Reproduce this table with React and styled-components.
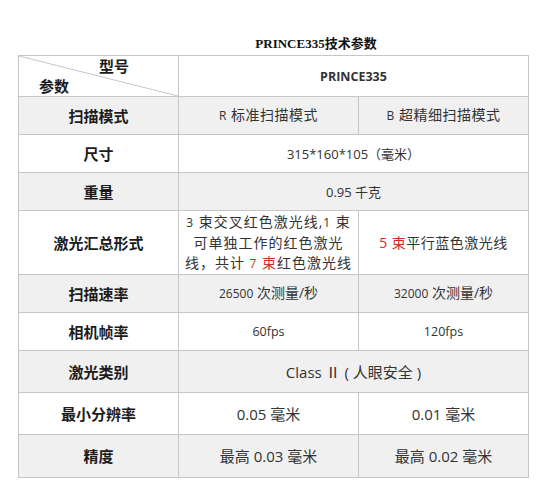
import React from "react";
import styled, { createGlobalStyle } from "styled-components";

const Global = createGlobalStyle`
  html, body { margin: 0; padding: 0; background: #fff; }
  body { font-family: "Open Sans", "Noto Sans CJK SC", sans-serif; color: #333; }
`;

const Page = styled.div`
  padding: 36px 0 0 18px;
  width: 510px;
`;

const Title = styled.div`
  font-family: "Liberation Serif", "Noto Sans CJK SC", serif;
  font-weight: bold;
  font-size: 13px;
  line-height: 16px;
  height: 16px;
  color: #111;
  text-align: center;
  padding-left: 86px;
  margin-bottom: 3px;
`;

const Table = styled.table`
  border-collapse: collapse;
  width: 510px;
  table-layout: fixed;
`;

const Row = styled.tr`
  height: ${(p) => p.$h}px;
  background: ${(p) => (p.$gray ? "#f0f0f0" : "#fff")};
`;

const Label = styled.th`
  border: 1px solid #c6c6c6;
  font-family: "Noto Sans CJK SC", sans-serif;
  font-weight: bold;
  font-size: 15px;
  line-height: 20px;
  color: #1c1c1c;
  text-align: center;
  padding: 0;
`;

const Cell = styled.td`
  border: 1px solid #c6c6c6;
  text-align: center;
  font-size: ${(p) => p.$size || 14}px;
  line-height: ${(p) => p.$lh || 20}px;
  letter-spacing: ${(p) => p.$ls || 0}px;
  color: #333;
  padding: 0;
`;

const Small = styled.span`
  font-size: 12px;
`;

const Red = styled.span`
  color: #d22b1f;
`;

const CornerCell = styled.th`
  border: 1px solid #c6c6c6;
  position: relative;
  padding: 0;
  font-family: "Noto Sans CJK SC", sans-serif;
  font-weight: bold;
  font-size: 15px;
  color: #1c1c1c;
`;

const CornerGrid = styled.div`
  display: grid;
  grid-template-rows: 20px 20px;
  height: 40px;
`;

const Top = styled.span`
  justify-self: end;
  padding-right: 49px;
  line-height: 20px;
`;

const Bottom = styled.span`
  justify-self: start;
  padding-left: 20px;
  line-height: 20px;
`;

const Diagonal = styled.svg`
  position: absolute;
  inset: 0;
  width: 100%;
  height: 100%;
  pointer-events: none;
`;

const ModelHead = styled.th`
  border: 1px solid #c6c6c6;
  font-family: "Open Sans", "Noto Sans CJK SC", sans-serif;
  font-weight: bold;
  font-size: 12.5px;
  color: #333;
`;

export default function App() {
  return (
    <>
      <Global />
      <Page>
        <Title>PRINCE335技术参数</Title>
        <Table>
          <colgroup>
            <col style={{ width: 160 }} />
            <col style={{ width: 180 }} />
            <col style={{ width: 170 }} />
          </colgroup>
          <tbody>
            <Row $h={41}>
              <CornerCell>
                <Diagonal preserveAspectRatio="none" viewBox="0 0 100 100">
                  <line x1="0" y1="0" x2="100" y2="100" stroke="#c6c6c6" strokeWidth="1" vectorEffect="non-scaling-stroke" />
                </Diagonal>
                <CornerGrid>
                  <Top>型号</Top>
                  <Bottom>参数</Bottom>
                </CornerGrid>
              </CornerCell>
              <ModelHead colSpan={2}>PRINCE335</ModelHead>
            </Row>
            <Row $h={38} $gray>
              <Label>扫描模式</Label>
              <Cell $ls={0.5}><Small>R</Small> 标准扫描模式</Cell>
              <Cell $ls={0.5}><Small>B</Small> 超精细扫描模式</Cell>
            </Row>
            <Row $h={38}>
              <Label>尺寸</Label>
              <Cell colSpan={2} $size={13}>315*160*105（毫米）</Cell>
            </Row>
            <Row $h={38} $gray>
              <Label>重量</Label>
              <Cell colSpan={2} $size={13}>0.95 千克</Cell>
            </Row>
            <Row $h={64}>
              <Label>激光汇总形式</Label>
              <Cell $ls={1} $lh={20}>
                <Small>3</Small> 束交叉红色激光线,<Small>1</Small> 束<br />
                可单独工作的红色激光<br />
                线，共计 <Red><Small>7</Small> 束</Red>红色激光线
              </Cell>
              <Cell $ls={0.5}><Red>5 束</Red>平行蓝色激光线</Cell>
            </Row>
            <Row $h={38} $gray>
              <Label>扫描速率</Label>
              <Cell $size={14}><Small>26500</Small> 次测量/秒</Cell>
              <Cell $size={14}><Small>32000</Small> 次测量/秒</Cell>
            </Row>
            <Row $h={38}>
              <Label>相机帧率</Label>
              <Cell $size={12.5}>60fps</Cell>
              <Cell $size={12.5}>120fps</Cell>
            </Row>
            <Row $h={42} $gray>
              <Label>激光类别</Label>
              <Cell colSpan={2} $size={15}>Class Ⅱ ( 人眼安全 )</Cell>
            </Row>
            <Row $h={42}>
              <Label>最小分辨率</Label>
              <Cell $size={15}>0.05 毫米</Cell>
              <Cell $size={15}>0.01 毫米</Cell>
            </Row>
            <Row $h={43} $gray>
              <Label>精度</Label>
              <Cell $size={15}>最高 0.03 毫米</Cell>
              <Cell $size={15}>最高 0.02 毫米</Cell>
            </Row>
          </tbody>
        </Table>
      </Page>
    </>
  );
}
